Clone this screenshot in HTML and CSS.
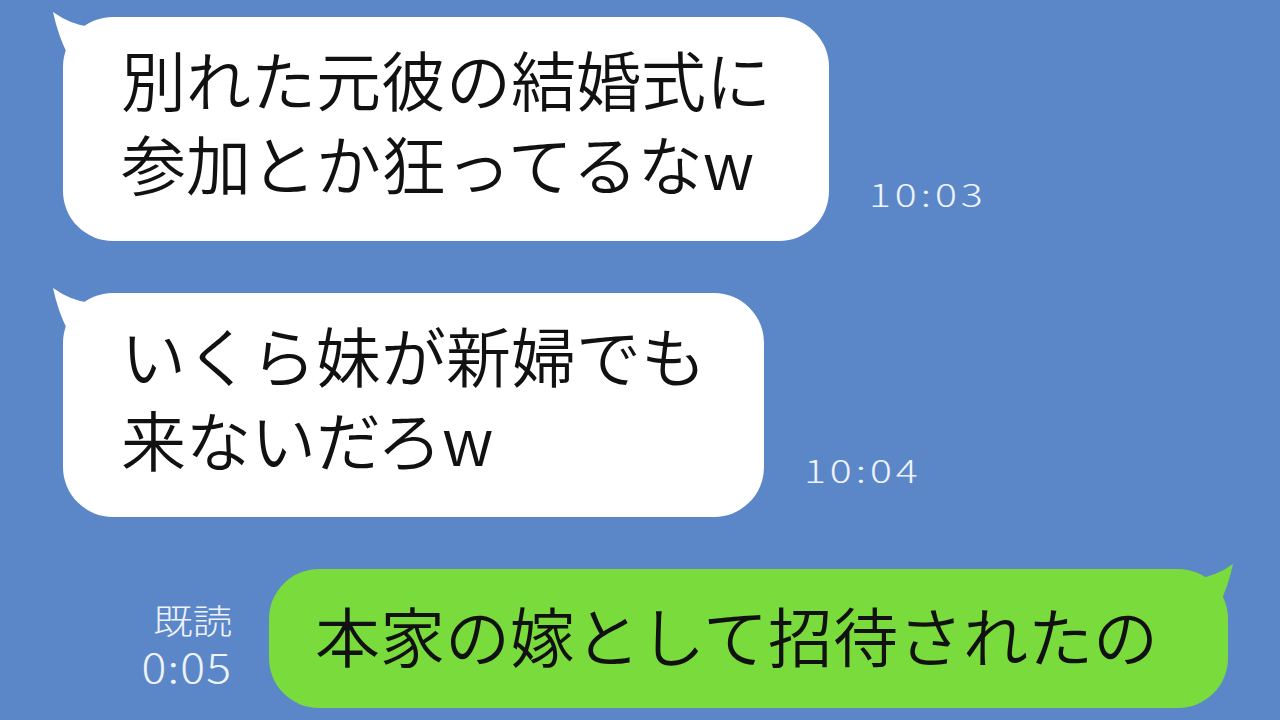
FILE: index.html
```html
<!DOCTYPE html>
<html lang="ja">

<head>
    <meta charset="UTF-8">
    <meta name="viewport" content="width=device-width, initial-scale=1.0">
    <title>トーク</title>
    <link rel="stylesheet" href="styles.css">
</head>

<body>
    <main class="chat">
        <div class="row in">
            <div class="bubble white">
                <svg class="tail tail-left" width="60" height="60" viewBox="-15 -10 60 60">
                    <path d="M-10,-5 Q-5,18 4,36 L30,30 L28,10 Q8,8 -10,-5 Z" />
                </svg>
                <p>別れた元彼の結婚式に<br>参加とか狂ってるなw</p>
            </div>
            <span class="time">10:03</span>
        </div>

        <div class="row in">
            <div class="bubble white">
                <svg class="tail tail-left" width="60" height="60" viewBox="-15 -10 60 60">
                    <path d="M-10,-5 Q-5,18 4,36 L30,30 L28,10 Q8,8 -10,-5 Z" />
                </svg>
                <p>いくら妹が新婦でも<br>来ないだろw</p>
            </div>
            <span class="time">10:04</span>
        </div>

        <div class="row out">
            <div class="meta">
                <span class="read">既読</span>
                <span class="time-out">0:05</span>
            </div>
            <div class="bubble green">
                <svg class="tail tail-right" width="60" height="60" viewBox="-45 -10 60 60">
                    <path d="M5,-5 Q0,18 -9,36 L-35,30 L-33,10 Q-13,8 5,-5 Z" />
                </svg>
                <p>本家の嫁として招待されたの</p>
            </div>
        </div>
    </main>
</body>

</html>
```

FILE: styles.css
```css
body {
    margin: 0;
    padding: 0;
    background-color: #5b87c9;
    font-family: "Noto Sans CJK JP", "Noto Sans", sans-serif;
    color: #111;
    overflow: hidden;
}

.chat {
    display: flex;
    flex-direction: column;
    gap: 52px;
    padding: 17px 52px 0 63px;
}

.row {
    display: flex;
    align-items: flex-end;
}

.row.in {
    gap: 40px;
}

.row.out {
    justify-content: flex-end;
    gap: 37px;
}

.bubble {
    position: relative;
    border-radius: 50px;
    padding: 19px 58px 37px;
}

.bubble p {
    margin: 0;
    font-size: 65px;
    font-weight: 350;
    line-height: 84px;
    white-space: nowrap;
    position: relative;
}

.white {
    background-color: #fff;
}

.white .tail path {
    fill: #fff;
}

.green {
    background-color: #79dc3c;
    padding: 23px 70px 32px 46px;
}

.green .tail path {
    fill: #79dc3c;
}

.tail {
    position: absolute;
    top: -10px;
}

.tail-left {
    left: -15px;
}

.tail-right {
    right: -15px;
}

.time {
    display: inline-block;
    color: #eef3fb;
    font-size: 31px;
    font-weight: 300;
    letter-spacing: 3px;
    line-height: 1;
    margin-bottom: 32px;
    transform: scaleX(1.32);
    transform-origin: left bottom;
}

.meta {
    display: flex;
    flex-direction: column;
    align-items: flex-end;
    color: #eef3fb;
    font-weight: 300;
    padding-bottom: 20px;
    transform: scaleX(1.16);
    transform-origin: right bottom;
}

.read {
    font-size: 34px;
    line-height: 48px;
}

.time-out {
    font-size: 40px;
    line-height: 44px;
    letter-spacing: 1px;
}
```
